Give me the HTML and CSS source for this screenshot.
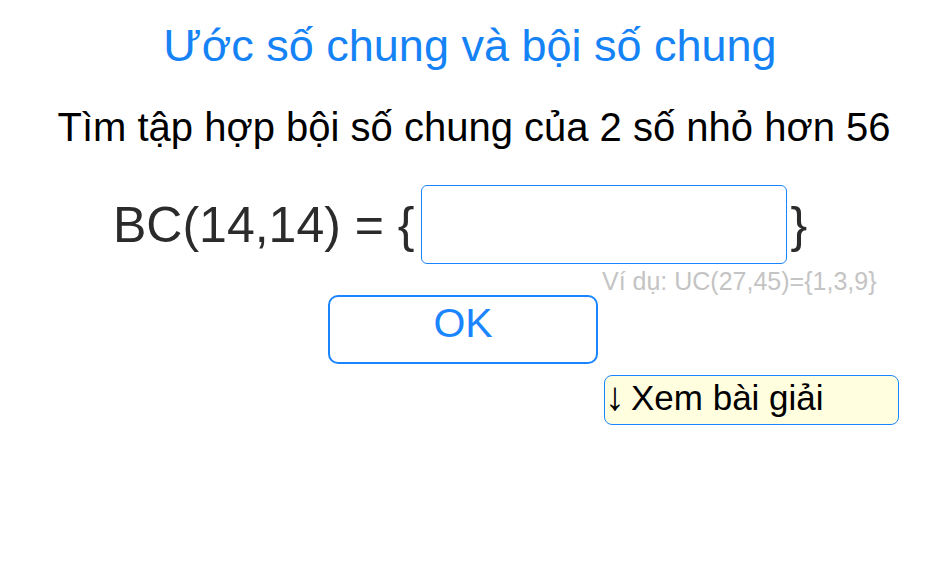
FILE: index.html
```html
<!DOCTYPE html>
<html lang="vi">
<head>
<meta charset="utf-8">
<title>Ước số chung và bội số chung</title>
<link rel="stylesheet" href="styles.css">
</head>
<body>
<div class="page">
  <h1 class="title">Ước số chung và bội số chung</h1>
  <p class="question">Tìm tập hợp bội số chung của 2 số nhỏ hơn 56</p>
  <div class="answer-row">
    <span class="expr">BC(14,14) = {</span>
    <input class="answer" type="text">
    <span class="expr close">}</span>
  </div>
  <div class="hint-row"><span class="hint">Ví dụ: UC(27,45)={1,3,9}</span></div>
  <div class="ok-row"><button class="ok">OK</button></div>
  <div class="solution-row"><div class="solution"><span class="arrow">↓</span><span class="label">Xem bài giải</span></div></div>
</div>
</body>
</html>
```
FILE: styles.css
```css
* { box-sizing: border-box; }
html, body { margin: 0; padding: 0; background: #fff; }
body { font-family: "Liberation Sans", Arial, sans-serif; }
.page { width: 940px; height: 588px; display: flex; flex-direction: column; }
.title {
  margin: 18px 0 0 0;
  text-align: center;
  font-size: 45px;
  font-weight: normal;
  color: #1583f5;
  line-height: 56px;
}
.question {
  margin: 31px 0 0 8px;
  text-align: center;
  font-size: 40px;
  line-height: 44px;
  color: #000;
}
.answer-row {
  margin-top: 36px;
  display: flex;
  align-items: center;
  padding-left: 113px;
}
.expr { font-size: 50px; color: #2b2b2b; line-height: 60px; }
.answer {
  width: 366px;
  height: 79px;
  margin-left: 6px;
  border: 1px solid #1a85ff;
  border-radius: 6px;
  outline: none;
  font-size: 40px;
  font-family: inherit;
}
.close { margin-left: 4px; }
.hint-row { padding-left: 602px; margin-top: 4px; }
.hint { font-size: 25px; color: #c4c4c4; line-height: 26px; }
.ok-row { padding-left: 328px; margin-top: 1px; }
.ok {
  width: 270px;
  height: 69px;
  border: 2px solid #1a85ff;
  border-radius: 10px;
  background: #fff;
  color: #1a85ff;
  font-family: inherit;
  font-size: 41px;
  padding: 0 0 14px 0;
  line-height: 50px;
}
.solution-row { padding-left: 604px; margin-top: 11px; }
.solution {
  width: 295px;
  height: 50px;
  background: #ffffe0;
  border: 1px solid #1a85ff;
  border-radius: 8px;
  font-size: 35px;
  line-height: 40px;
  color: #000;
  white-space: nowrap;
  display: flex;
  align-items: baseline;
}
.arrow { font-size: 40px; line-height: 40px; }
.label { margin-left: 6px; }
```
